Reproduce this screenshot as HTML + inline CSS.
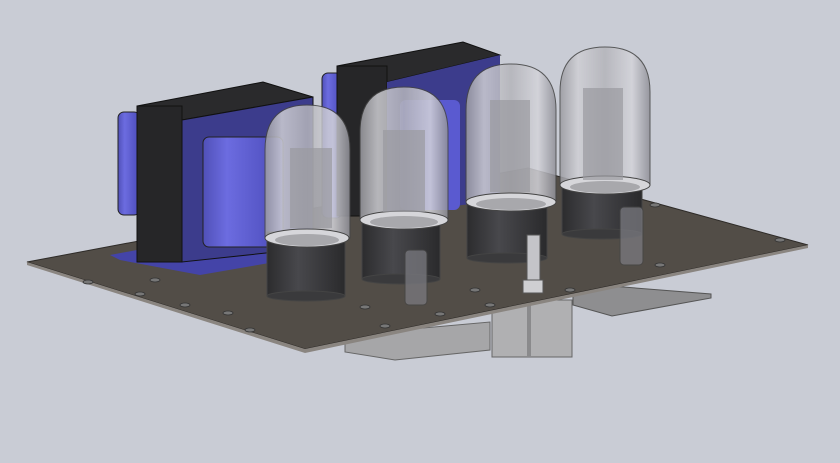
<!DOCTYPE html><html><head><style>html,body{margin:0;padding:0;background:#c9ccd5;}svg{display:block}</style></head><body>
<svg width="840" height="463" viewBox="0 0 840 463" xmlns="http://www.w3.org/2000/svg">
<defs>
<linearGradient id="glass" x1="0" x2="1"><stop offset="0" stop-color="#9a9aa0"/><stop offset="0.2" stop-color="#cfcfd4"/><stop offset="0.5" stop-color="#b4b4ba"/><stop offset="0.8" stop-color="#d4d4da"/><stop offset="1" stop-color="#8e8e96"/></linearGradient>
<linearGradient id="base" x1="0" x2="1"><stop offset="0" stop-color="#2c2c2e"/><stop offset="0.4" stop-color="#48484c"/><stop offset="1" stop-color="#2a2a2c"/></linearGradient>
<linearGradient id="blue" x1="0" x2="1"><stop offset="0" stop-color="#5050b8"/><stop offset="0.3" stop-color="#6c6ce0"/><stop offset="1" stop-color="#4a4ab8"/></linearGradient>
</defs>
<!-- under panels -->
<polygon points="345,335 490,322 490,350 395,360 345,352" fill="#a6a6a8" stroke="#666" stroke-width="1"/>
<rect x="492" y="300" width="80" height="57" fill="#b0b0b2" stroke="#666"/>
<rect x="527" y="300" width="4" height="57" fill="#8a8a8c"/>
<polygon points="573,283 711,294 711,298 612,316 573,305" fill="#8e8e90" stroke="#555"/>
<!-- plate -->
<polygon points="27,262 528,168 808,245 305,349" fill="#524d47" stroke="#2e2b28" stroke-width="1"/>
<polygon points="27,262 305,349 808,245 808,248 305,353 27,265" fill="#8a8580"/>
<!-- holes -->
<g fill="#777" stroke="#333" stroke-width="0.8">
<ellipse cx="88" cy="282" rx="5" ry="2"/><ellipse cx="140" cy="294" rx="5" ry="2"/><ellipse cx="185" cy="305" rx="5" ry="2"/><ellipse cx="228" cy="313" rx="5" ry="2"/><ellipse cx="250" cy="330" rx="5" ry="2"/>
<ellipse cx="365" cy="307" rx="5" ry="2"/><ellipse cx="385" cy="326" rx="5" ry="2"/><ellipse cx="440" cy="314" rx="5" ry="2"/><ellipse cx="475" cy="290" rx="5" ry="2"/><ellipse cx="490" cy="305" rx="5" ry="2"/><ellipse cx="570" cy="290" rx="5" ry="2"/><ellipse cx="660" cy="265" rx="5" ry="2"/><ellipse cx="655" cy="205" rx="5" ry="2"/><ellipse cx="780" cy="240" rx="5" ry="2"/><ellipse cx="155" cy="280" rx="5" ry="2"/>
</g>
<!-- left transformer -->
<polygon points="110,255 137,250 182,262 270,248 275,262 200,275 120,260" fill="#4444a8"/>
<rect x="118" y="112" width="22" height="103" rx="6" fill="url(#blue)" stroke="#222"/>
<polygon points="137,106 263,82 313,97 182,120" fill="#2a2a2c" stroke="#111"/>
<rect x="137" y="106" width="45" height="156" fill="#262628" stroke="#111"/>
<polygon points="182,120 313,97 313,248 182,262" fill="#3c3c8c" stroke="#111"/>
<rect x="203" y="137" width="80" height="110" rx="6" fill="url(#blue)" stroke="#222"/>
<!-- right transformer -->
<rect x="322" y="73" width="20" height="145" rx="6" fill="url(#blue)" stroke="#222"/>
<polygon points="337,66 463,42 500,55 387,82" fill="#2a2a2c" stroke="#111"/>
<rect x="337" y="66" width="50" height="150" fill="#262628" stroke="#111"/>
<polygon points="387,82 500,55 500,200 387,215" fill="#3c3c8c"/>
<rect x="400" y="100" width="60" height="110" rx="6" fill="#5a5ad0"/>
<!-- tubes -->
<g stroke="#444" stroke-width="1">
<rect x="267" y="232" width="78" height="64" fill="url(#base)"/><ellipse cx="306" cy="296" rx="39" ry="5" fill="#3a3a3c"/>
<path d="M265,238 V150 Q265,105 307,105 Q350,105 350,150 V238 Z" fill="url(#glass)" opacity="0.85"/>
<ellipse cx="307" cy="238" rx="42" ry="9" fill="#d6d6da"/><ellipse cx="307" cy="240" rx="32" ry="6" fill="#a8a8ac" stroke="none"/>
<rect x="290" y="148" width="42" height="80" fill="#9a9aa0" opacity="0.7" stroke="none"/>

<rect x="362" y="215" width="78" height="64" fill="url(#base)"/><ellipse cx="401" cy="279" rx="39" ry="5" fill="#3a3a3c"/>
<path d="M360,220 V132 Q360,87 404,87 Q448,87 448,132 V220 Z" fill="url(#glass)" opacity="0.85"/>
<ellipse cx="404" cy="220" rx="44" ry="9" fill="#d6d6da"/><ellipse cx="404" cy="222" rx="34" ry="6" fill="#a8a8ac" stroke="none"/>
<rect x="383" y="130" width="42" height="82" fill="#9a9aa0" opacity="0.7" stroke="none"/>

<rect x="467" y="198" width="80" height="60" fill="url(#base)"/><ellipse cx="507" cy="258" rx="40" ry="5" fill="#3a3a3c"/>
<path d="M466,202 V110 Q466,64 511,64 Q556,64 556,110 V202 Z" fill="url(#glass)" opacity="0.85"/>
<ellipse cx="511" cy="202" rx="45" ry="9" fill="#d6d6da"/><ellipse cx="511" cy="204" rx="35" ry="6" fill="#a8a8ac" stroke="none"/>
<rect x="490" y="100" width="40" height="92" fill="#9a9aa0" opacity="0.7" stroke="none"/>

<rect x="562" y="182" width="80" height="52" fill="url(#base)"/><ellipse cx="602" cy="234" rx="40" ry="5" fill="#3a3a3c"/>
<path d="M560,185 V92 Q560,47 605,47 Q650,47 650,92 V185 Z" fill="url(#glass)" opacity="0.85"/>
<ellipse cx="605" cy="185" rx="45" ry="9" fill="#d6d6da"/><ellipse cx="605" cy="187" rx="35" ry="6" fill="#a8a8ac" stroke="none"/>
<rect x="583" y="88" width="40" height="92" fill="#9a9aa0" opacity="0.7" stroke="none"/>
</g>
<!-- small caps / bolt -->
<rect x="405" y="250" width="22" height="55" rx="4" fill="#7a7a80" opacity="0.75" stroke="#444"/>
<rect x="620" y="207" width="23" height="58" rx="4" fill="#7a7a80" opacity="0.75" stroke="#444"/>
<rect x="527" y="235" width="13" height="46" fill="#c4c4c8" stroke="#555"/>
<rect x="523" y="280" width="20" height="13" fill="#cfcfd2" stroke="#555"/>
</svg>
</body></html>
